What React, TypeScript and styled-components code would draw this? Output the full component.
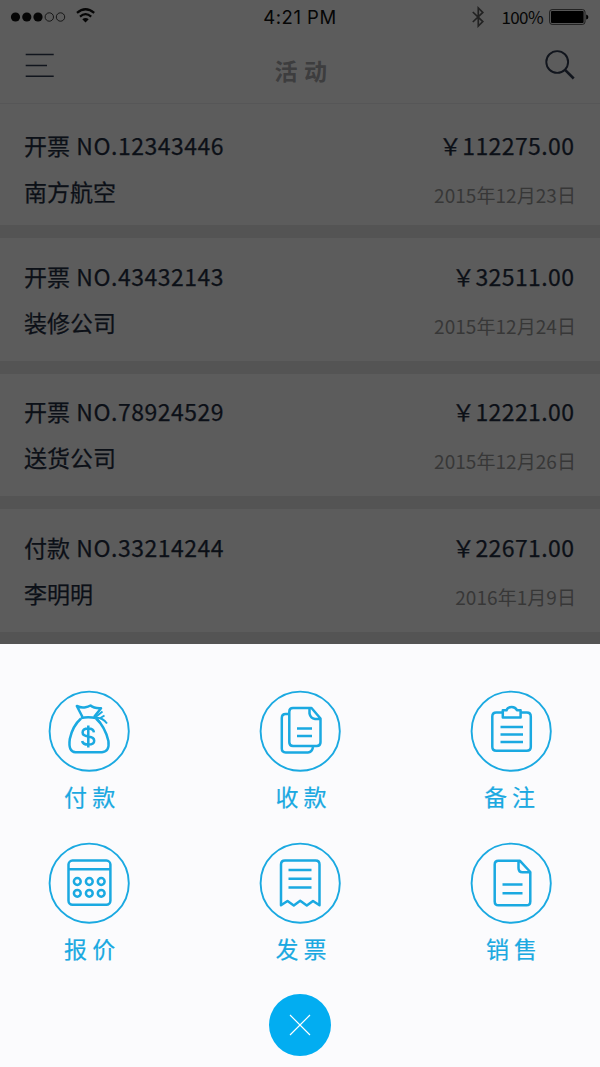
import React from 'react';
import styled, { createGlobalStyle } from 'styled-components';

const GlobalStyle = createGlobalStyle`
  * { box-sizing: border-box; }
  body {
    margin: 0;
    background: #5c5c5c;
    font-family: "Noto Sans CJK SC", "Noto Sans", sans-serif;
  }
`;

const Screen = styled.div`
  width: 600px;
  height: 1067px;
  display: flex;
  flex-direction: column;
  overflow: hidden;
  background: #5c5c5c;
`;

const StatusBar = styled.header`
  display: grid;
  grid-template-columns: 1fr auto 1fr;
  align-items: center;
  height: 34px;
  flex: none;
  color: #060606;
`;

const Signal = styled.div`
  display: flex;
  align-items: center;
  gap: 10px;
  padding-left: 10px;
`;

const Clock = styled.span`
  font: 400 18.5px/34px Inter, sans-serif;
  letter-spacing: 0.5px;
`;

const Power = styled.div`
  display: flex;
  justify-content: flex-end;
  align-items: center;
  padding-right: 11px;
`;

const Percent = styled.span`
  margin: 0 6px 0 17px;
  font-size: 17px;
  line-height: 34px;
  letter-spacing: -0.6px;
`;

const NavBar = styled.nav`
  display: flex;
  justify-content: space-between;
  align-items: flex-start;
  height: 70px;
  flex: none;
  padding: 0 25px;
  border-bottom: 1px solid #565657;
  color: #11151d;
`;

const MenuIcon = styled.svg`
  margin-top: 16px;
`;

const SearchIcon = styled.svg`
  margin-top: 14px;
`;

const Title = styled.h1`
  margin: 0;
  padding: 1px 0 0 2px;
  font-size: 23px;
  font-weight: 700;
  line-height: 70px;
  letter-spacing: 0.6px;
  white-space: pre;
  color: #3d3d3e;
`;

const List = styled.main`
  flex: none;
`;

const Entry = styled.article<{ $h: number; $top: number; $band: number }>`
  display: flex;
  justify-content: space-between;
  height: ${(p) => p.$h + p.$band}px;
  padding: ${(p) => p.$top}px 25px 0 24px;
  border-bottom: ${(p) => p.$band}px solid #545454;
`;

const Column = styled.div<{ $end?: boolean }>`
  display: flex;
  flex-direction: column;
  align-items: ${(p) => (p.$end ? 'flex-end' : 'flex-start')};
`;

const Line = styled.span`
  font-size: 23px;
  font-weight: 400;
  line-height: 46px;
  color: #0c1017;
  white-space: nowrap;
  -webkit-text-stroke: 0.25px currentColor;
`;

const Code = styled.span`
  margin-left: 1.2px;
  letter-spacing: 0.5px;
`;

const Amount = styled(Line)`
  margin-right: 0.6px;
  letter-spacing: 0.4px;
`;

const DateText = styled.time`
  margin-right: -1px;
  font-size: 19px;
  font-weight: 400;
  line-height: 54px;
  letter-spacing: 0.05px;
  color: #373737;
  white-space: nowrap;
`;

const Sheet = styled.section`
  flex: 1;
  display: flex;
  flex-direction: column;
  align-items: center;
  padding-top: 46px;
  background: #fbfbfd;
`;

const Actions = styled.div`
  display: grid;
  grid-template-columns: repeat(3, 82px);
  grid-auto-rows: 152px;
  justify-content: space-between;
  width: 504px;
`;

const Action = styled.button`
  display: flex;
  flex-direction: column;
  align-items: center;
  padding: 0;
  border: 0;
  background: none;
  color: #1aa9e1;
  font-family: inherit;
`;

const Label = styled.span<{ $shift: number }>`
  margin: 7px 0 0 ${(p) => p.$shift * 2}px;
  font-size: 23px;
  font-weight: 400;
  line-height: 35px;
  white-space: pre;
  -webkit-text-stroke: 0.2px currentColor;
`;

const Close = styled.button`
  display: flex;
  align-items: center;
  justify-content: center;
  width: 62px;
  height: 62px;
  padding: 0;
  border: 0;
  border-radius: 50%;
  background: #02adf1;
`;

const entries = [
  { kind: '开票', no: '12343446', name: '南方航空', amount: '112275.00', date: '2015年12月23日', h: 121, top: 18, band: 13 },
  { kind: '开票', no: '43432143', name: '装修公司', amount: '32511.00', date: '2015年12月24日', h: 123, top: 15, band: 13 },
  { kind: '开票', no: '78924529', name: '送货公司', amount: '12221.00', date: '2015年12月26日', h: 122, top: 14, band: 13 },
  { kind: '付款', no: '33214244', name: '李明明', amount: '22671.00', date: '2016年1月9日', h: 123, top: 15, band: 12 },
];

/* Glyphs share an 82 × 82 box, ring centred at 41,41. */
const glyphs = {
  bag: (
    <>
      <path d="M34.5 27 L28.8 16 Q33 18 37.5 17.2 Q40 16.8 42.5 15.5 Q46 18.6 53 18.2 L46 27" />
      <path d="M33 28 Q40 26.4 48 28" />
      <path d="M33 28.5 Q24.5 36 21.8 49 Q20 61.8 27.5 62.2 H54 Q61.8 61.8 60.4 51 Q57 36.5 48 28.5" />
      <path d="M47 27.5 L54.5 21.5 M47 27.5 Q55 27.5 59 33.5 M51.5 28.5 L56.5 25.5 M49 28.5 L52.5 33" strokeWidth="1.9" />
      <path d="M45.9 42.3 Q45.5 38.6 40.3 38.6 Q34.6 38.6 34.6 42.6 Q34.6 46 40.3 46.5 Q46.2 47.2 46.2 50.7 Q46.2 54.6 40.3 54.6 Q34.6 54.6 34.2 51 M40.3 35.4 V57.6" />
    </>
  ),
  copies: (
    <>
      <path d="M50.5 18 H34 Q30.3 18 30.3 21.7 V52.3 Q30.3 56 34 56 H57.8 Q61.5 56 61.5 52.3 V28.5 L52.5 18 H50.5 V23.5 Q51.5 28.5 56 29 H61" />
      <path d="M29.5 24 H26.7 Q22.8 24 22.8 28 V58.5 Q22.8 62.4 26.7 62.4 H49 Q53 62.4 54 57" />
      <path d="M38 38.4 H53 M38 46 H53" />
    </>
  ),
  clipboard: (
    <>
      <path d="M32 22.6 H26.3 Q22.3 22.6 22.3 26.6 V56.8 Q22.3 60.8 26.3 60.8 H56.8 Q60.8 60.8 60.8 56.8 V26.6 Q60.8 22.6 56.8 22.6 H51" />
      <path d="M32.8 27.5 V20.3 H36.5 Q37.5 17 41.7 17 Q45.5 17 47 20.3 H50.6 V27.5 Z" />
      <path d="M30.5 37 H53 M30.5 44.5 H53 M30.5 52 H53" />
    </>
  ),
  calendar: (
    <>
      <rect x="20.5" y="18.6" width="41.9" height="44.2" rx="4" />
      <path d="M21 27.3 H62" />
      {[39.5, 51.3].map((y) => [29.3, 41.3, 53.2].map((x) => <circle key={`${x}-${y}`} cx={x} cy={y} r="3.4" />))}
    </>
  ),
  receipt: (
    <>
      <path d="M22 63.3 V22.5 Q22 18.6 26 18.6 H56.5 Q60.5 18.6 60.5 22.5 V63.3 L54 59 L47.8 63.5 L41.2 58.8 L34.8 63.5 L28.5 59 Z" />
      <path d="M29.5 28 H52.5 M29.5 36.7 H52.5 M29.5 45.5 H52.5" />
    </>
  ),
  page: (
    <>
      <path d="M48.5 18.8 H28.5 Q24.7 18.8 24.7 22.6 V59.4 Q24.7 63.2 28.5 63.2 H56.5 Q60.3 63.2 60.3 59.4 V30 L50 18.8 H48.5 V26 Q48.5 30.3 52.5 30.3 H60" />
      <path d="M32.5 42.5 H52.5 M32.5 51.3 H52.5" />
    </>
  ),
};

const actions: { glyph: keyof typeof glyphs; label: string; shift: number }[] = [
  { glyph: 'bag', label: '付 款', shift: 0.6 },
  { glyph: 'copies', label: '收 款', shift: 1 },
  { glyph: 'clipboard', label: '备 注', shift: -1.5 },
  { glyph: 'calendar', label: '报 价', shift: 0.6 },
  { glyph: 'receipt', label: '发 票', shift: 1 },
  { glyph: 'page', label: '销 售', shift: 0.5 },
];

const StatusIcons = () => (
  <Signal>
    <svg width="56" height="12" viewBox="0 0 56 12" fill="none" stroke="currentColor">
      {[5.5, 16.8, 28].map((x) => <circle key={x} cx={x} cy="6" r="4.6" fill="currentColor" stroke="none" />)}
      {[39.3, 50.5].map((x) => <circle key={x} cx={x} cy="6" r="4.2" strokeWidth="0.8" />)}
    </svg>
    <svg width="20" height="18" viewBox="0 0 20 18" fill="none" stroke="currentColor" strokeWidth="2.2">
      <path d="M1 4.9 Q9.5 -2.4 18.2 4.9 M4 8.6 Q9.5 3.8 15.2 8.6" />
      <path d="M6.3 11.3 Q9.5 8.5 12.7 11.3 L9.5 14.5 Z" fill="currentColor" stroke="none" />
    </svg>
  </Signal>
);

export default function App() {
  return (
    <Screen>
      <GlobalStyle />
      <StatusBar>
        <StatusIcons />
        <Clock>4:21 PM</Clock>
        <Power>
          <svg width="13" height="22" viewBox="0 0 13 22" fill="none" stroke="#222" strokeWidth="1.7">
            <path d="M1.8 6 L11.8 15.6 L7.3 20 V2 L11.8 6.4 L1.8 16" />
          </svg>
          <Percent>100%</Percent>
          <svg width="40" height="16" viewBox="0 0 40 16">
            <rect x="0.6" y="0.6" width="35.4" height="14.8" rx="2.5" fill="none" stroke="#161616" strokeWidth="0.9" />
            <rect x="2" y="2" width="32.6" height="12" rx="1" fill="#000" />
            <path d="M37.2 5.5 Q39.4 6 39.4 8 Q39.4 10 37.2 10.5 Z" fill="#000" />
          </svg>
        </Power>
      </StatusBar>
      <NavBar>
        <MenuIcon width="30" height="30" viewBox="0 0 30 30" stroke="currentColor" strokeWidth="1.5">
          <path d="M0.7 4.4 H28.7 M0.7 15.4 H22 M0.7 26.2 H28.7" />
        </MenuIcon>
        <Title>活 动</Title>
        <SearchIcon width="30" height="34" viewBox="0 0 30 34" fill="none" stroke="currentColor">
          <circle cx="12.2" cy="14" r="10.9" strokeWidth="1.9" />
          <path d="M19.8 21.6 L28.7 30.5" strokeWidth="2.6" />
        </SearchIcon>
      </NavBar>
      <List>
        {entries.map((e) => (
          <Entry key={e.no} $h={e.h} $top={e.top} $band={e.band}>
            <Column>
              <Line>{e.kind} <Code>NO.{e.no}</Code></Line>
              <Line>{e.name}</Line>
            </Column>
            <Column $end>
              <Amount>￥{e.amount}</Amount>
              <DateText>{e.date}</DateText>
            </Column>
          </Entry>
        ))}
      </List>
      <Sheet>
        <Actions>
          {actions.map((a) => (
            <Action key={a.label}>
              <svg width="82" height="82" viewBox="0 0 82 82" fill="none" stroke="currentColor" strokeWidth="2.5" strokeLinejoin="round">
                <circle cx="41.2" cy="41.2" r="39.6" strokeWidth="1.9" />
                {glyphs[a.glyph]}
              </svg>
              <Label $shift={a.shift}>{a.label}</Label>
            </Action>
          ))}
        </Actions>
        <Close aria-label="关闭">
          <svg width="22" height="22" viewBox="0 0 22 22" stroke="#fff" strokeWidth="1.2">
            <path d="M1 1 L21 21 M21 1 L1 21" />
          </svg>
        </Close>
      </Sheet>
    </Screen>
  );
}
